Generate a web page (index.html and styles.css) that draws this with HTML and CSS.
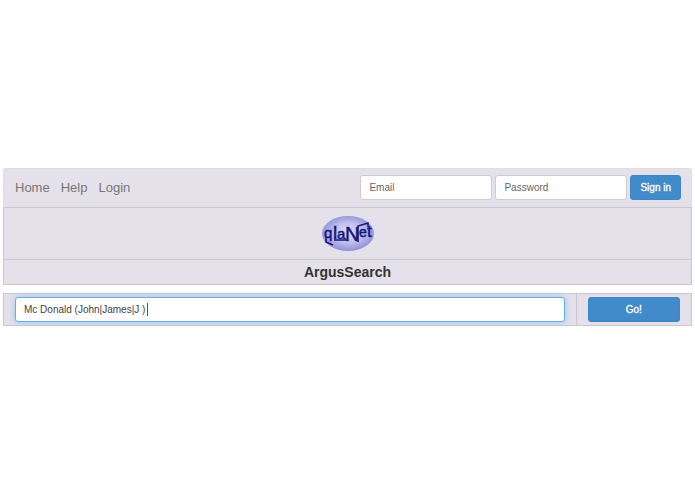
FILE: index.html
```html
<!DOCTYPE html>
<html lang="en">
<head>
    <meta charset="UTF-8">
    <meta name="viewport" content="width=device-width, initial-scale=1.0">
    <title>ArgusSearch</title>
    <link rel="stylesheet" href="styles.css">
</head>
<body>
    <div class="container">
        <!-- Navigation -->
        <header class="navbar">
            <nav class="nav-links">
                <a href="#">Home</a>
                <a href="#">Help</a>
                <a href="#">Login</a>
            </nav>
            <form class="signin-form">
                <input type="email" class="form-control" placeholder="Email" aria-label="Email">
                <input type="password" class="form-control" placeholder="Password" aria-label="Password">
                <button type="submit" class="btn">Sign in</button>
            </form>
        </header>

        <!-- Logo and title -->
        <div class="logo-row">
            <svg class="logo" viewBox="0 0 54 36" role="img" aria-label="plaNet">
                <defs>
                    <radialGradient id="globe" cx="50%" cy="48%" r="52%">
                        <stop offset="0" stop-color="#dcdcf8"/>
                        <stop offset="0.5" stop-color="#c3c3ef"/>
                        <stop offset="1" stop-color="#9292d6"/>
                    </radialGradient>
                </defs>
                <ellipse cx="27" cy="17.5" rx="26" ry="17.5" fill="url(#globe)"/>
                <g class="logo-text">
                    <text x="3" y="22" font-size="15">q</text>
                    <text x="12" y="23" font-size="19">l</text>
                    <text x="16" y="23" font-size="15">a</text>
                    <text x="24" y="25" font-size="20">N</text>
                    <text x="38" y="21" font-size="14">e</text>
                    <text x="46" y="21" font-size="17">t</text>
                </g>
                <path class="logo-line" d="M5 21 V26 L12 29 M13 24 H26 M37 26 V10 L47 7 V11"/>
            </svg>
        </div>
        <h1 class="title-row">ArgusSearch</h1>

        <!-- Search -->
        <form class="search-row">
            <div class="search-field">
                <input type="text" class="form-control search-input" value="Mc Donald (John|James|J )" aria-label="Search" autofocus>
            </div>
            <div class="search-action">
                <button type="submit" class="btn">Go!</button>
            </div>
        </form>
    </div>

    <script>
        // Put the cursor after the search text
        const searchInput = document.querySelector('.search-input');
        searchInput.focus();
        searchInput.setSelectionRange(searchInput.value.length, searchInput.value.length);
    </script>
</body>
</html>
```
FILE: styles.css
```css
* {
    box-sizing: border-box;
}
body {
    display: flex;
    flex-direction: column;
    justify-content: center;
    min-height: 100vh;
    margin: 0;
    padding: 0 3px;
    background: #fff;
    color: #333;
    font-family: "Liberation Sans", Arial, sans-serif;
    font-size: 10px;
}
.navbar,
.logo-row,
.title-row,
.search-row {
    background: #e4e1ea;
    border: 1px solid #cbc7d2;
}
.navbar {
    display: flex;
    align-items: center;
    justify-content: space-between;
    padding: 6px 10px 7px 11px;
    border-color: #e0dde6;
    border-bottom: none;
    border-radius: 3px 3px 0 0;
}
.nav-links {
    display: flex;
    gap: 11px;
    font-size: 13px;
}
.nav-links a {
    color: #777;
    text-decoration: none;
}
.signin-form {
    display: flex;
    gap: 3px;
}
.form-control {
    width: 132px;
    height: 25px;
    padding: 0 8px;
    background-color: #fff;
    border: 1px solid #ccc;
    border-radius: 3px;
    color: #444;
    font-family: inherit;
    font-size: 10px;
}
.form-control::placeholder {
    color: #666;
}
.btn {
    height: 25px;
    padding: 0 9px;
    background: #428bca;
    border: 1px solid #3e86c5;
    border-radius: 3px;
    color: #fff;
    font-family: inherit;
    font-size: 10px;
    -webkit-text-stroke: 0.3px #fff;
    cursor: pointer;
}
.btn:hover {
    background: #3276b1;
}
.logo-row {
    display: flex;
    justify-content: center;
    padding: 8px 8px 7px;
}
.logo {
    width: 54px;
    height: 36px;
}
.logo-text {
    fill: #15157c;
    stroke: #15157c;
    stroke-width: 0.5px;
}
.logo-line {
    fill: none;
    stroke: #15157c;
    stroke-width: 1.5px;
}
.title-row {
    margin: 0 0 8px;
    padding: 4px;
    border-top: none;
    font-size: 14px;
    line-height: 16px;
    text-align: center;
}
.search-row {
    display: grid;
    grid-template-columns: 5fr 1fr;
}
.search-field {
    padding: 3px 11px;
    border-right: 1px solid #cbc7d2;
}
.search-action {
    padding: 3px 11px;
}
.search-action .btn {
    width: 100%;
}
.search-input {
    display: block;
    width: 100%;
    outline: none;
}
.search-input:focus {
    border-color: #66afe9;
    box-shadow: 0 0 6px rgba(102, 175, 233, 0.6);
    /* text cursor */
    caret-color: transparent;
    background-image: linear-gradient(#555, #555);
    background-position: 131px center;
    background-repeat: no-repeat;
    background-size: 1px 13px;
}
```
